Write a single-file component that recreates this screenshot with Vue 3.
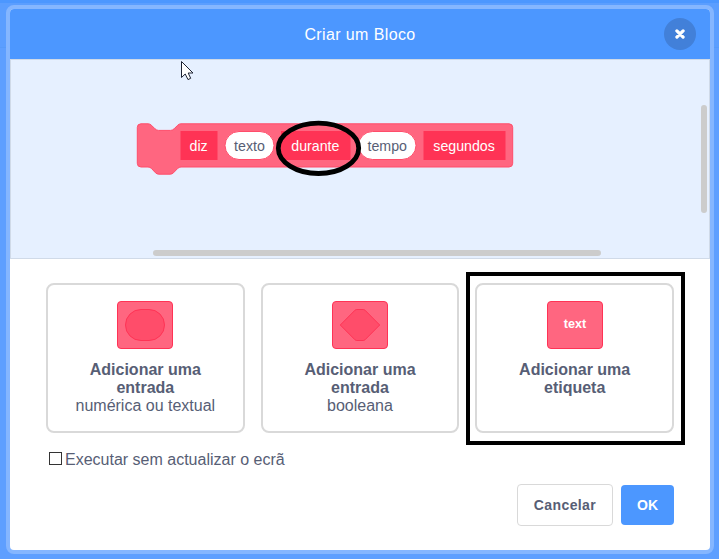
<script setup>
const options = [
  { shape: 'round', lines: ['Adicionar uma', 'entrada'], hint: 'numérica ou textual' },
  { shape: 'hexagon', lines: ['Adicionar uma', 'entrada'], hint: 'booleana' },
  { shape: 'text', lines: ['Adicionar uma', 'etiqueta'], hint: '', marked: true }
]
const labels = [
  { text: 'diz', x: 180.5, width: 37 },
  { text: 'durante', x: 281, width: 69.5 },
  { text: 'segundos', x: 423.5, width: 82 }
]
const inputs = [
  { text: 'texto', x: 225, width: 49 },
  { text: 'tempo', x: 358.5, width: 57.5 }
]
</script>

<template>
  <div class="page">
    <div class="modal">
      <header class="header">
        <span class="title">Criar um Bloco</span>
        <button class="close" aria-label="Fechar">
          <svg width="10" height="10" viewBox="0 0 10 10">
            <path d="M1.9 1.9 L8.1 8.1 M8.1 1.9 L1.9 8.1" stroke="#fff" stroke-width="3.2" stroke-linecap="round" />
          </svg>
        </button>
      </header>

      <div class="workspace">
        <svg class="canvas" width="698" height="198" viewBox="11 60 698 198">
          <path
            d="M141 123.8 H148 Q150 123.8 151.5 125.3 L155 128.8 Q156.6 130.4 158.6 130.4 H170.5 Q172.5 130.4 174.1 128.8 L177.6 125.3 Q179.1 123.8 181 123.8 H509 Q512.7 123.8 512.7 127.5 V163.3 Q512.7 167 509 167 H181 Q179.1 167 177.6 168.5 L173.6 172.7 Q172 174.2 170 174.2 H159 Q157 174.2 155.4 172.7 L151.5 168.5 Q150 167 148 167 H141 Q137.3 167 137.3 163.3 V127.5 Q137.3 123.8 141 123.8 Z"
            fill="#ff6680" stroke="#ff4d6a" />
          <g v-for="l in labels" :key="l.text">
            <rect :x="l.x" y="131" :width="l.width" height="29" fill="#ff3355" />
            <text :x="l.x + l.width / 2 - 0.4" y="150.7" fill="#fff">{{ l.text }}</text>
          </g>
          <g v-for="i in inputs" :key="i.text">
            <rect :x="i.x" y="131.5" :width="i.width" height="28" rx="14" fill="#fff" stroke="#ff4d6a" />
            <text :x="i.x + i.width / 2" y="150.7" fill="#575e75">{{ i.text }}</text>
          </g>
          <rect x="153" y="250" width="448" height="6" rx="3" fill="#ccc" />
          <rect x="701" y="105" width="6" height="108" rx="3" fill="#ccc" />
          <ellipse cx="318.5" cy="148.3" rx="40.2" ry="25.2" fill="none" stroke="#000" stroke-width="4.8" />
          <path d="M181.5 61.5 V77.5 L185.2 74 L188 79.6 L190.7 78.3 L188.2 73 H193 Z" fill="#fff" stroke="#1c2233" />
        </svg>
      </div>

      <div class="body">
        <div class="options">
          <button v-for="(o, n) in options" :key="n" class="option" :class="{ marked: o.marked }">
            <svg class="icon" width="56" height="48" viewBox="0 0 56 48">
              <rect x=".5" y=".5" width="55" height="47" rx="3.5" fill="#ff6680" stroke="#ff3355" />
              <rect v-if="o.shape === 'round'" x="8.5" y="8.5" width="39" height="31" rx="15.5" fill="#ff4d6a" stroke="#ff3355" />
              <path v-else-if="o.shape === 'hexagon'" d="M8.3 24 L23 9.2 Q23.8 8.5 24.8 8.5 H31.2 Q32.2 8.5 33 9.2 L47.7 24 L33 38.8 Q32.2 39.5 31.2 39.5 H24.8 Q23.8 39.5 23 38.8 Z" fill="#ff4d6a" stroke="#ff3355" />
              <text v-else x="28" y="27" class="icon-text">text</text>
            </svg>
            <strong v-for="line in o.lines" :key="line">{{ line }}</strong>
            <span>{{ o.hint }}</span>
          </button>
        </div>
        <label class="check"><span class="box"></span><span class="check-text">Executar sem actualizar o ecrã</span></label>
        <div class="actions">
          <button class="cancel">Cancelar</button>
          <button class="ok">OK</button>
        </div>
      </div>
    </div>
  </div>
</template>

<style>
body {
  margin: 0;
}
</style>

<style scoped>
.page {
  box-sizing: border-box;
  width: 719px;
  height: 559px;
  padding: 5px 5px 5px 6px;
  background: linear-gradient(#4c97ff 3px, #5b9eff 3px, #5b9eff 47px, #579bfa 47px, #579bfa 48px, #5e9fff 48px);
  font-family: "Liberation Sans", Arial, sans-serif;
  color: #575e75;
  overflow: hidden;
}
button {
  font: inherit;
  color: inherit;
  margin: 0;
  padding: 0;
}
.modal {
  box-sizing: border-box;
  width: 708px;
  height: 549px;
  border: 4px solid #85b6ff;
  border-radius: 8px;
  background: #fff;
  overflow: hidden;
}
.header {
  display: grid;
  grid-template-columns: 1fr auto 1fr;
  align-items: center;
  height: 50px;
  background: #4c97ff;
  color: #fff;
}
.title {
  grid-column: 2;
  padding-top: 2px;
  font-size: 16px;
  letter-spacing: 0.38px;
}
.close {
  justify-self: end;
  display: flex;
  align-items: center;
  justify-content: center;
  width: 32px;
  height: 32px;
  margin-right: 14px;
  border: 0;
  border-radius: 50%;
  background: #4280d9;
}
.workspace {
  border: 1px solid #d0dae8;
  height: 198px;
  background: #e6f0ff;
}
.canvas {
  display: block;
  font-size: 14.2px;
  text-anchor: middle;
}
.body {
  padding: 24px 36px 0;
}
.options {
  display: grid;
  grid-template-columns: repeat(3, 1fr);
  gap: 16px;
}
.option {
  box-sizing: border-box;
  height: 150px;
  padding-top: 16px;
  display: flex;
  flex-direction: column;
  align-items: center;
  border: 2px solid #d9d9d9;
  border-radius: 8px;
  background: #fff;
  font-size: 16px;
  line-height: 18px;
}
.marked {
  position: relative;
}
.marked::after {
  content: "";
  position: absolute;
  inset: -13px -13px -14px -11px;
  border: 4px solid #000;
}
.icon {
  flex: none;
  margin-bottom: 12px;
}
.icon-text {
  font-size: 12.6px;
  font-weight: bold;
  fill: #fff;
  text-anchor: middle;
}
.check {
  display: flex;
  align-items: center;
  gap: 3px;
  height: 18px;
  margin: 17px 0 0 3px;
  font-size: 16px;
}
.check-text {
  padding-top: 2px;
}
.box {
  box-sizing: border-box;
  width: 13px;
  height: 13px;
  margin-bottom: 1px;
  border: 1px solid #333;
}
.actions {
  display: flex;
  justify-content: flex-end;
  align-items: center;
  gap: 8px;
  margin-top: 16px;
  font-size: 14px;
  font-weight: bold;
}
.cancel {
  box-sizing: border-box;
  width: 96px;
  height: 42px;
  border: 1px solid #d9d9d9;
  border-radius: 4px;
  background: #fff;
  letter-spacing: 0.4px;
}
.ok {
  width: 53px;
  height: 40px;
  border: 0;
  border-radius: 4px;
  background: #4c97ff;
  color: #fff;
}
</style>
